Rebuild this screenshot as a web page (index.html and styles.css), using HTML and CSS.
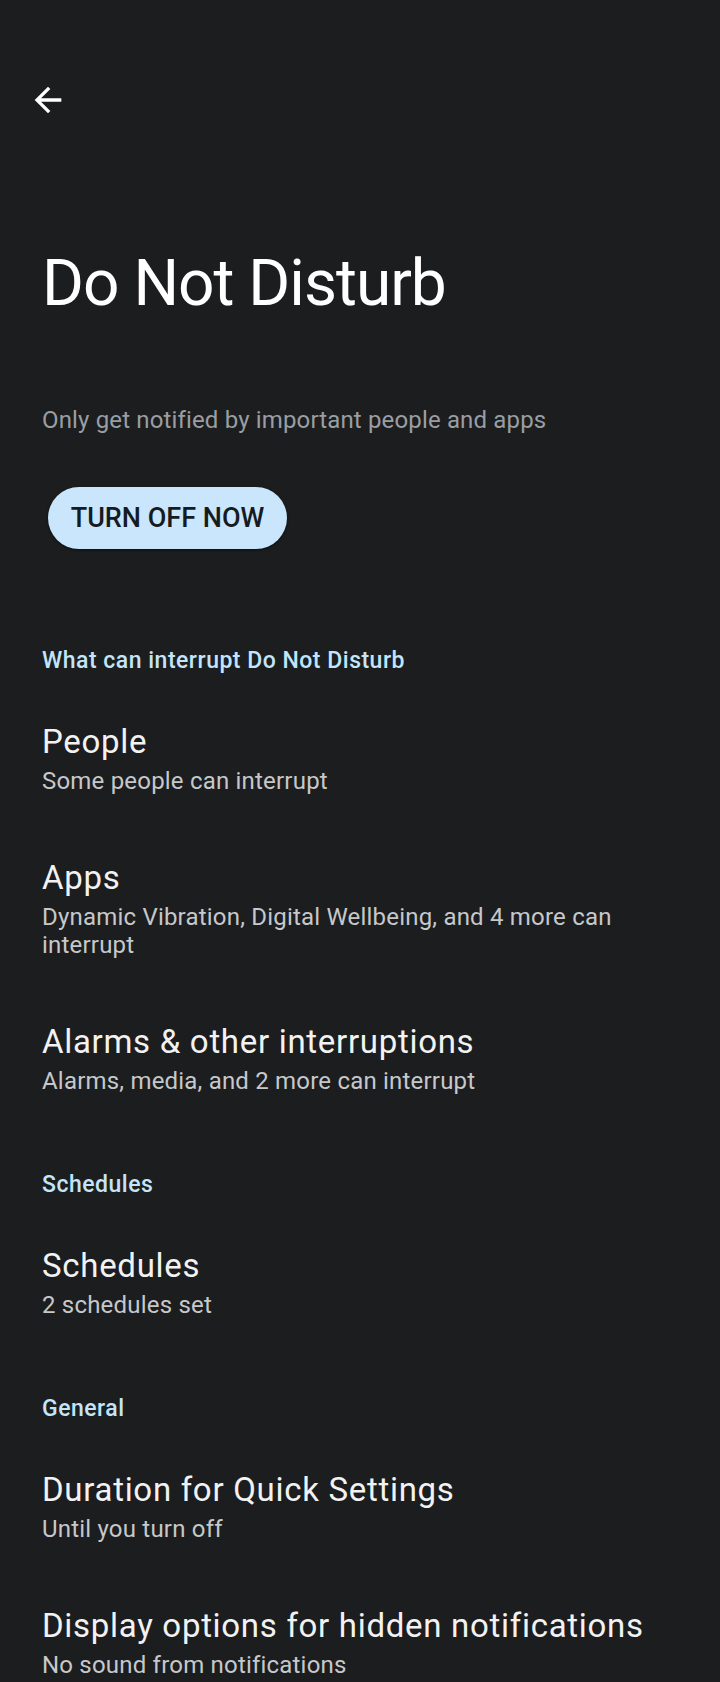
FILE: index.html
```html
<!DOCTYPE html>
<html lang="en">
<head>
    <meta charset="UTF-8">
    <meta name="viewport" content="width=device-width, initial-scale=1.0">
    <title>Do Not Disturb</title>
    <link rel="stylesheet" href="styles.css">
</head>
<body>
    <div class="screen">
        <div class="toolbar">
            <button class="back" aria-label="Back">
                <svg viewBox="0 0 24 24" width="40" height="40">
                    <path d="M20 11H7.83l5.59-5.59L12 4l-8 8 8 8 1.41-1.41L7.83 13H20v-2z" fill="#ffffff"/>
                </svg>
            </button>
        </div>

        <h1 class="page-title">Do Not Disturb</h1>
        <p class="intro">Only get notified by important people and apps</p>

        <div class="action">
            <button class="turn-off">TURN OFF NOW</button>
        </div>

        <div class="group">
            <h2 class="group-title">What can interrupt Do Not Disturb</h2>
            <div class="pref">
                <div class="pref-title">People</div>
                <div class="pref-summary">Some people can interrupt</div>
            </div>
            <div class="pref">
                <div class="pref-title">Apps</div>
                <div class="pref-summary">Dynamic Vibration, Digital Wellbeing, and 4 more can interrupt</div>
            </div>
            <div class="pref">
                <div class="pref-title">Alarms &amp; other interruptions</div>
                <div class="pref-summary">Alarms, media, and 2 more can interrupt</div>
            </div>
        </div>

        <div class="group">
            <h2 class="group-title">Schedules</h2>
            <div class="pref">
                <div class="pref-title">Schedules</div>
                <div class="pref-summary">2 schedules set</div>
            </div>
        </div>

        <div class="group">
            <h2 class="group-title">General</h2>
            <div class="pref">
                <div class="pref-title">Duration for Quick Settings</div>
                <div class="pref-summary">Until you turn off</div>
            </div>
            <div class="pref">
                <div class="pref-title">Display options for hidden notifications</div>
                <div class="pref-summary">No sound from notifications</div>
            </div>
        </div>
    </div>
</body>
</html>
```

FILE: styles.css
```css
html, body {
    margin: 0;
    background-color: #1c1d1f;
}

body {
    font-family: Roboto, "Noto Sans", sans-serif;
    color: #f2f2f2;
    height: 1682px;
    overflow: hidden;
}

.screen {
    padding: 0 40px 0 42px;
}

.toolbar {
    padding-top: 80px;
    margin-left: -14px;
}

.back {
    display: block;
    width: 40px;
    height: 40px;
    padding: 0;
    border: none;
    background: none;
    cursor: pointer;
}

.back svg {
    display: block;
}

.page-title {
    margin: 126px 0 0;
    font-size: 64px;
    line-height: 76px;
    font-weight: 400;
    letter-spacing: -1px;
    color: #ffffff;
}

.intro {
    margin: 84px 0 0;
    font-size: 24px;
    line-height: 28px;
    letter-spacing: 0.15px;
    color: #9a9ea3;
}

.action {
    margin: 53px 0 54px 6px;
}

.turn-off {
    display: block;
    width: 239px;
    height: 62px;
    padding: 0;
    border: none;
    border-radius: 31px;
    background-color: #c9e6fc;
    color: #151b20;
    font-family: Roboto, sans-serif;
    font-size: 27px;
    font-weight: 500;
    box-shadow: 0 1px 3px rgba(0, 0, 0, 0.5);
    cursor: pointer;
}

.group-title {
    margin: 0;
    padding: 44px 0 16px;
    font-size: 23px;
    line-height: 28px;
    font-weight: 500;
    letter-spacing: 0.5px;
    color: #c2e5fb;
}

.pref {
    padding: 31px 0 32px;
}

.pref-title {
    font-size: 33px;
    line-height: 40px;
    letter-spacing: 0.7px;
    color: #f2f2f2;
}

.pref-summary {
    margin-top: 5px;
    font-size: 24px;
    line-height: 28px;
    letter-spacing: 0.2px;
    color: #c6c8ca;
}
```
